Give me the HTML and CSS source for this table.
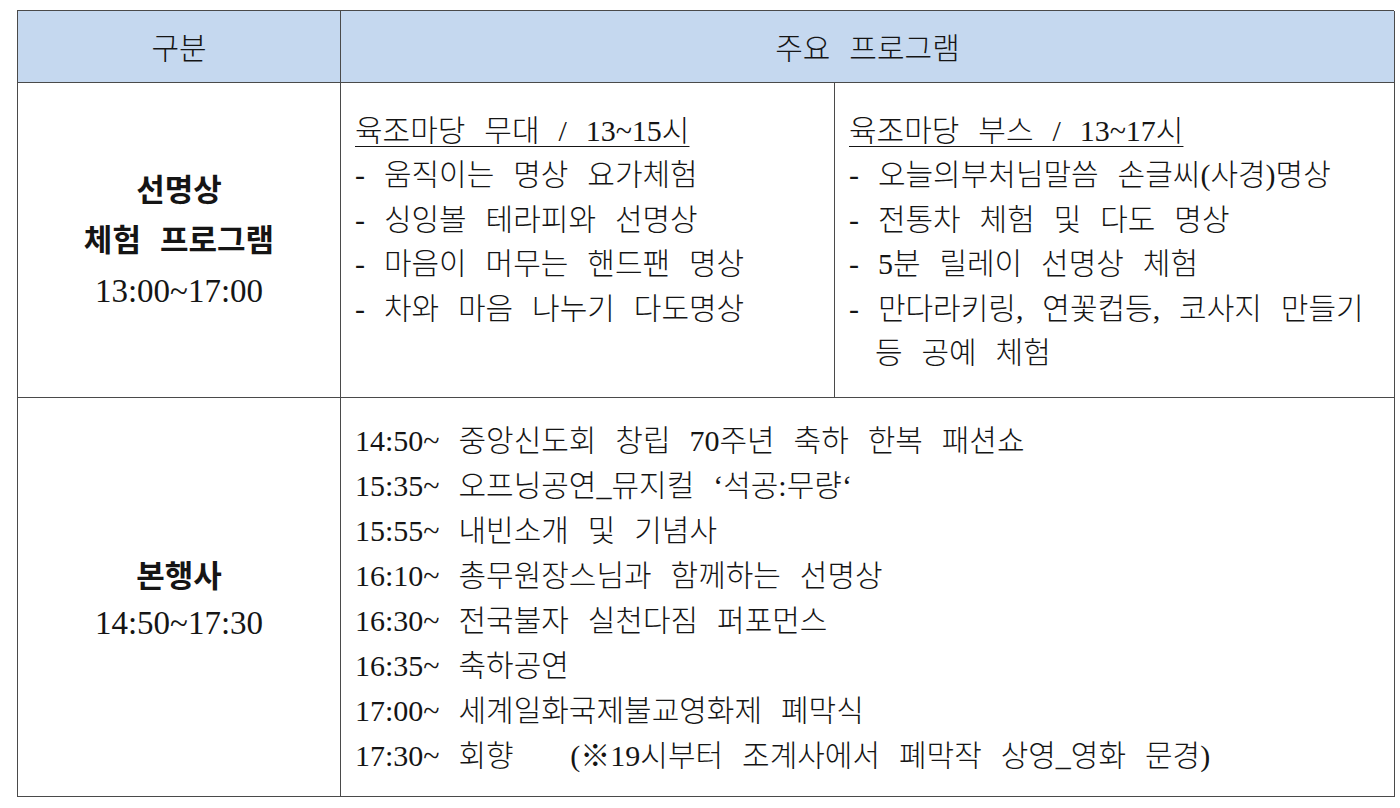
FILE: index.html
```html
<!DOCTYPE html>
<html lang="ko">
<head>
<meta charset="utf-8">
<title>프로그램</title>
<link rel="stylesheet" href="styles.css">
</head>
<body>
<div class="sheet">
  <div class="cell head c1">구분</div>
  <div class="cell head c23">주요 프로그램</div>

  <div class="cell side">
    <div class="b">선명상</div>
    <div class="b">체험 프로그램</div>
    <div class="t">13:00~17:00</div>
  </div>
  <div class="cell sub">
    <div class="u">육조마당 무대 / 13~15시</div>
    <div>- 움직이는 명상 요가체험</div>
    <div>- 싱잉볼 테라피와 선명상</div>
    <div>- 마음이 머무는 핸드팬 명상</div>
    <div>- 차와 마음 나누기 다도명상</div>
  </div>
  <div class="cell sub">
    <div class="u">육조마당 부스 / 13~17시</div>
    <div>- 오늘의부처님말씀 손글씨(사경)명상</div>
    <div>- 전통차 체험 및 다도 명상</div>
    <div>- 5분 릴레이 선명상 체험</div>
    <div>- 만다라키링, 연꽃컵등, 코사지 만들기</div>
    <div class="cont">등 공예 체험</div>
  </div>

  <div class="cell side side2">
    <div class="b">본행사</div>
    <div class="t">14:50~17:30</div>
  </div>
  <div class="cell prog c23">
    <div>14:50~ 중앙신도회 창립 70주년 축하 한복 패션쇼</div>
    <div>15:35~ 오프닝공연_뮤지컬 ‘석공:무량‘</div>
    <div>15:55~ 내빈소개 및 기념사</div>
    <div>16:10~ 총무원장스님과 함께하는 선명상</div>
    <div>16:30~ 전국불자 실천다짐 퍼포먼스</div>
    <div>16:35~ 축하공연</div>
    <div>17:00~ 세계일화국제불교영화제 폐막식</div>
    <div>17:30~ 회향 &nbsp;&nbsp;(※19시부터 조계사에서 폐막작 상영_영화 문경)</div>
  </div>
</div>
</body>
</html>
```

FILE: styles.css
```css
* { box-sizing: border-box; }
html, body { margin: 0; padding: 0; background: #ffffff; }
body {
  font-family: "Liberation Serif", "Noto Sans CJK KR", serif;
  font-weight: 300;
  color: #151515;
  font-size: 30px;
}
.sheet {
  margin: 10px 0 0 17px;
  display: grid;
  grid-template-columns: 323px 494px 560px;
  grid-template-rows: 72px 315px 399px;
  border-top: 1px solid #4a4a4a;
  border-left: 1px solid #4a4a4a;
  width: 1377px;
}
.cell {
  border-right: 1px solid #4a4a4a;
  border-bottom: 1px solid #4a4a4a;
  white-space: nowrap;
  word-spacing: 0.38em;
}
.head {
  background: #c5d8ef;
  display: flex;
  align-items: center;
  justify-content: center;
  padding-bottom: 2px;
}
.c23 { grid-column: 2 / 4; }
.side {
  display: flex;
  flex-direction: column;
  justify-content: center;
  align-items: center;
  line-height: 50px;
  padding-top: 2px;
}
.side2 { line-height: 47px; padding-top: 6px; }
.b { font-weight: 700; font-size: 31px; }
.t { font-size: 33px; }
.sub {
  padding: 26px 10px 0 14px;
  line-height: 44.4px;
}
.u {
  text-decoration: underline;
  text-decoration-thickness: 1px;
  text-underline-offset: 5px;
}
.cont { padding-left: 26px; }
.prog {
  display: flex;
  flex-direction: column;
  justify-content: center;
  padding-left: 14px;
  line-height: 45px;
  padding-top: 2px;
}
```
